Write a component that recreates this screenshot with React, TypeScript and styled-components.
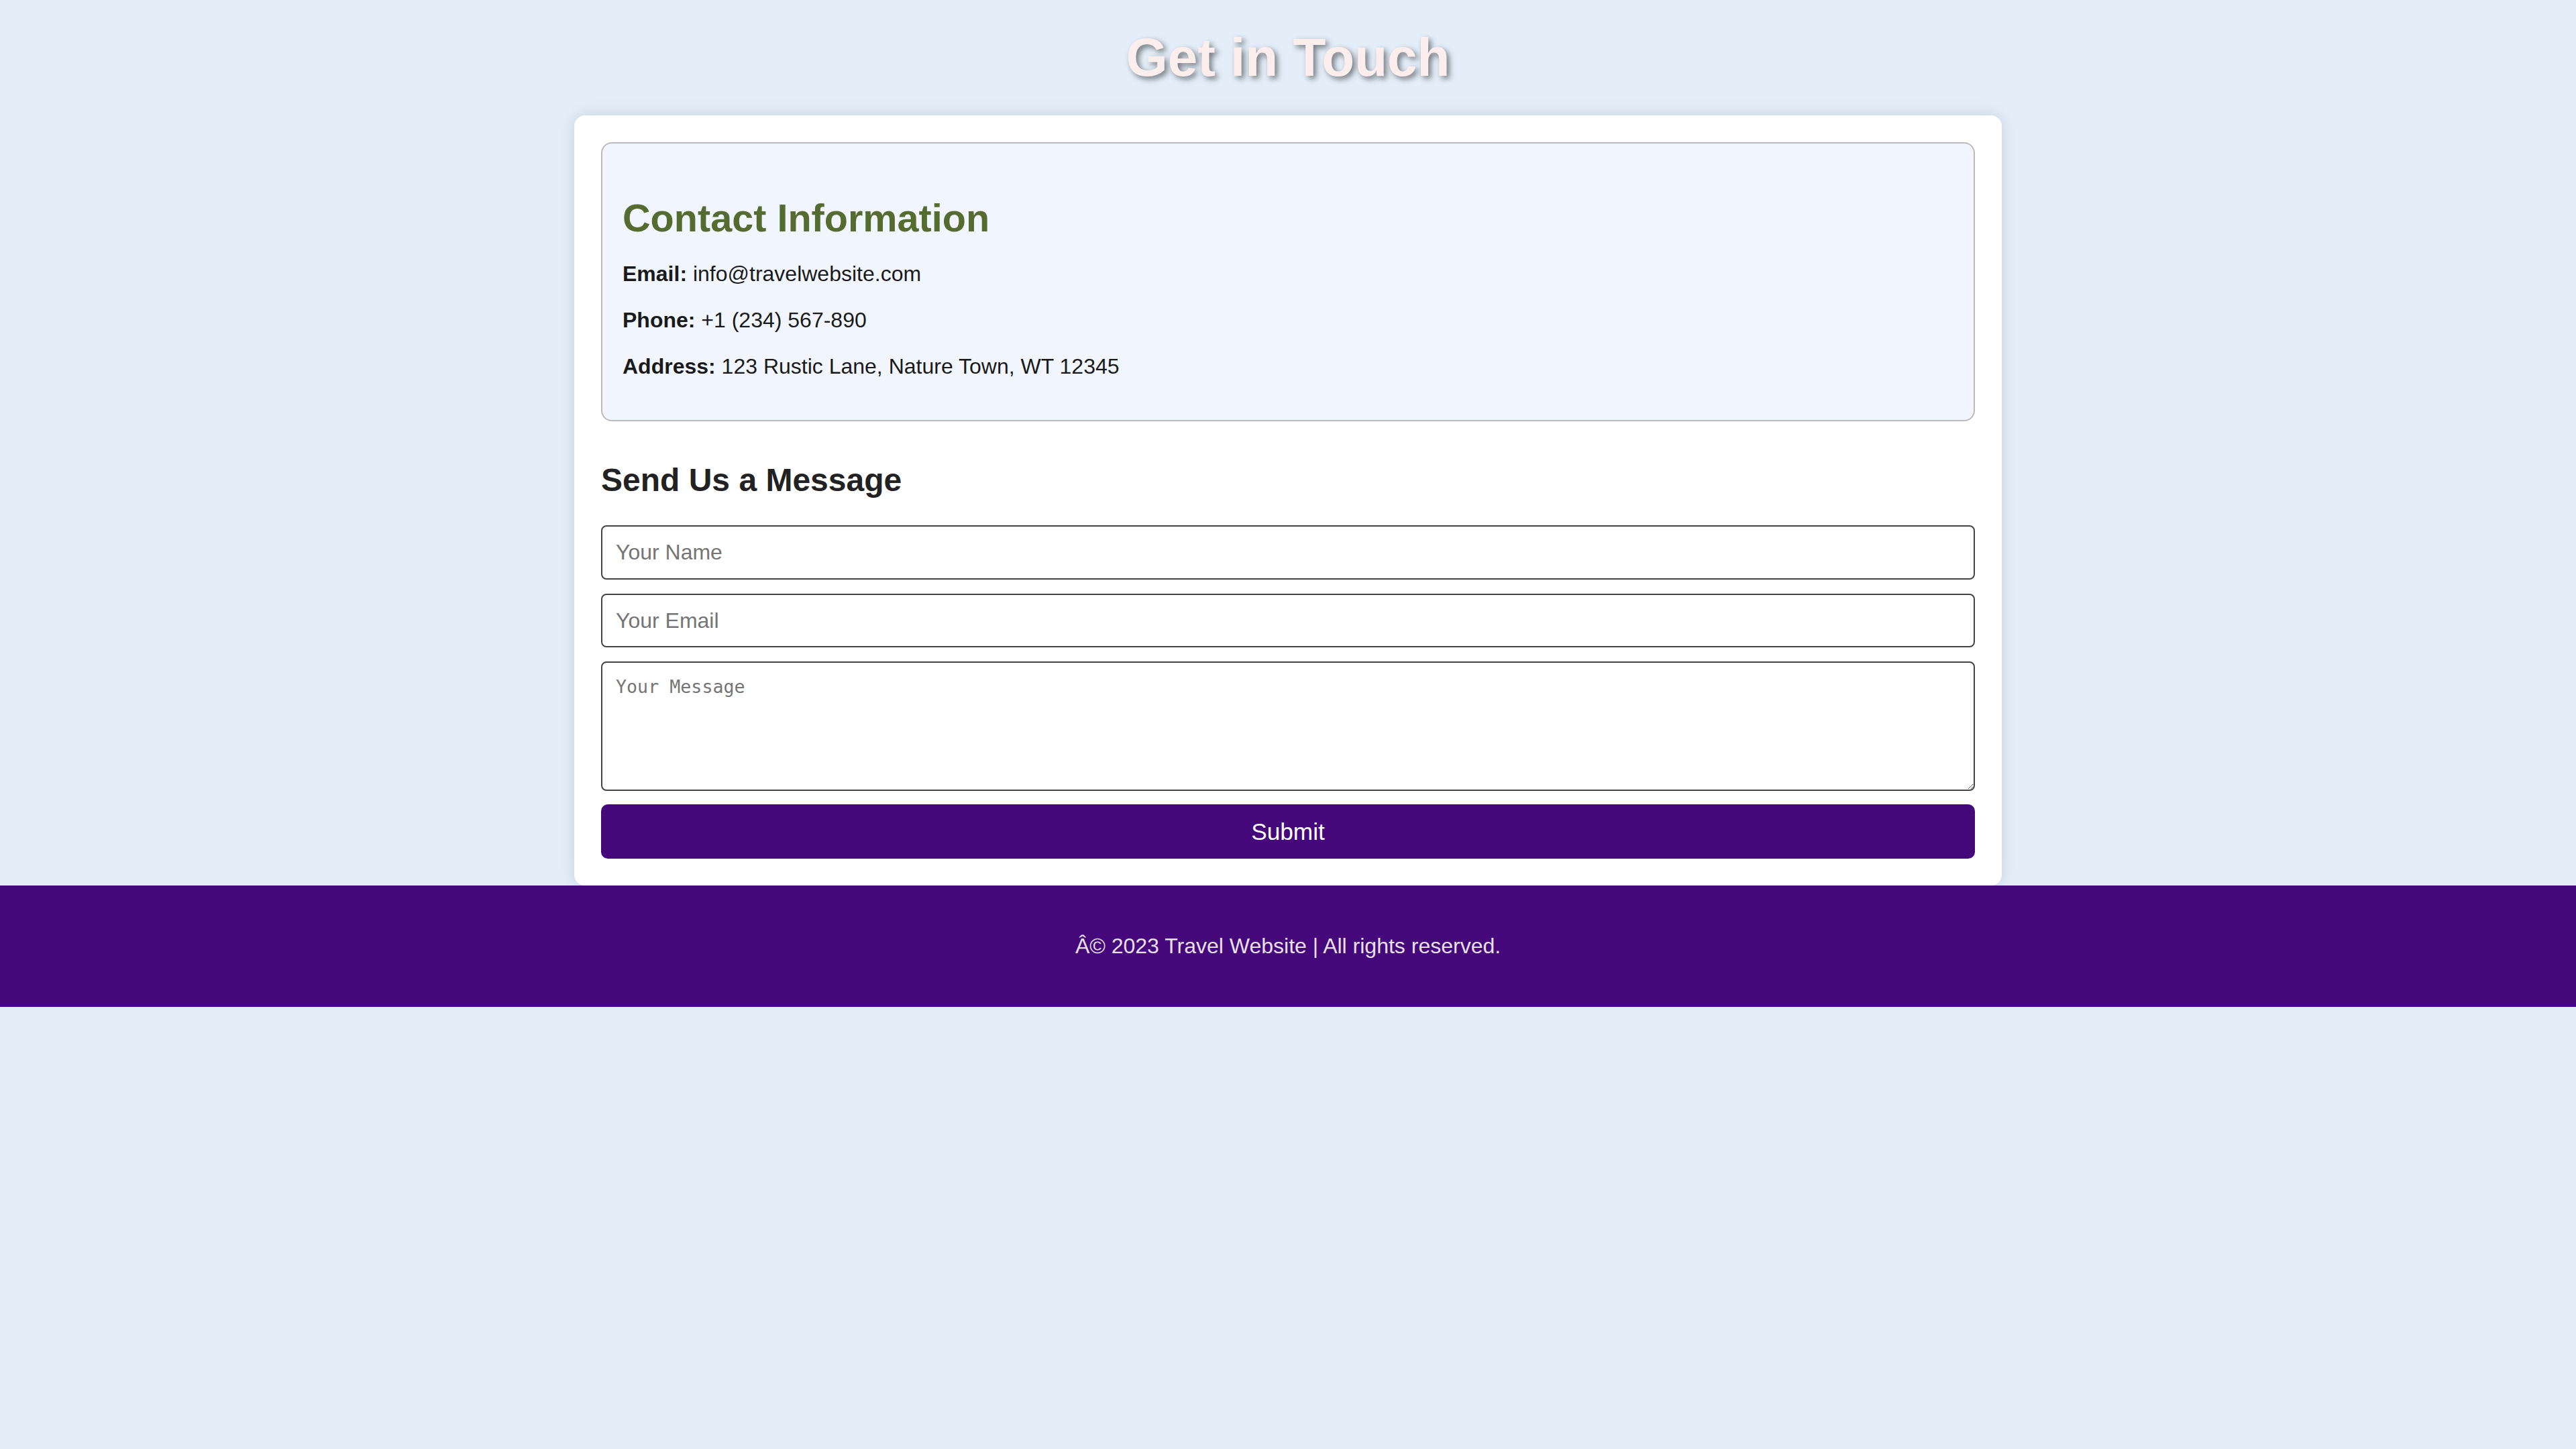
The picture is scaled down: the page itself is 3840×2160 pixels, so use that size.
import React from "react";
import styled, { createGlobalStyle } from "styled-components";

const GlobalStyle = createGlobalStyle`
  html, body {
    margin: 0;
    padding: 0;
    background: #e3eef8;
  }
  body {
    font-family: "Liberation Sans", Arial, sans-serif;
    font-size: 32px;
    color: #1a1a1a;
  }
  * { box-sizing: border-box; }
`;

const Header = styled.header`
  padding: 40px 0;
  text-align: center;
`;

const PageTitle = styled.h1`
  margin: 0;
  font-size: 80px;
  font-weight: 700;
  line-height: 92px;
  color: #fdeeee;
  text-shadow: 4px 4px 8px rgba(0, 0, 0, 0.5);
`;

const Card = styled.main`
  width: 2128px;
  margin: 0 auto;
  padding: 40px;
  background: #ffffff;
  border-radius: 16px;
  box-shadow: 0 0 24px rgba(0, 0, 0, 0.12);
`;

const ContactBox = styled.section`
  padding: 30px;
  background: #f1f6fe;
  border: 2px solid #bbbbbb;
  border-radius: 16px;
`;

const InfoTitle = styled.h2`
  margin: 48px 0 32px;
  font-size: 57.6px;
  line-height: 66px;
  font-weight: 700;
  color: #556b2f;
`;

const InfoLine = styled.p`
  margin: 32px 0;
  font-size: 32px;
  line-height: 36.8px;
  color: #1a1a1a;
`;

const Label = styled.strong`
  font-weight: 700;
`;

const FormTitle = styled.h2`
  margin: 60px 0 40px;
  font-size: 48px;
  line-height: 55px;
  font-weight: 700;
  color: #222222;
`;

const Form = styled.form`
  display: flex;
  flex-direction: column;
  gap: 20.5px;
`;

const TextInput = styled.input`
  width: 100%;
  height: 80.8px;
  padding: 20px;
  border: 2px solid #444444;
  border-radius: 8px;
  background: #ffffff;
  font-family: "Liberation Sans", Arial, sans-serif;
  font-size: 32px;
  color: #1a1a1a;
  outline: none;
  &::placeholder {
    color: #757575;
  }
`;

const MessageArea = styled.textarea`
  width: 100%;
  height: 193px;
  padding: 20px;
  border: 2px solid #444444;
  border-radius: 8px;
  background: #ffffff;
  font-family: "DejaVu Sans Mono", "Liberation Mono", monospace;
  font-size: 26.67px;
  color: #1a1a1a;
  outline: none;
  resize: vertical;
  &::placeholder {
    color: #757575;
  }
`;

const SubmitButton = styled.button`
  width: 100%;
  height: 80.5px;
  padding: 20px;
  border: none;
  border-radius: 10px;
  background: #44087a;
  color: #ffffff;
  font-family: "Liberation Sans", Arial, sans-serif;
  font-size: 35.2px;
  cursor: pointer;
`;

const Footer = styled.footer`
  padding: 40px 0;
  background: #44087a;
  text-align: center;
`;

const FooterText = styled.p`
  margin: 32px 0;
  font-size: 32px;
  line-height: 36.8px;
  color: #e8e0e8;
`;

export default function App() {
  return (
    <>
      <GlobalStyle />
      <Header>
        <PageTitle>Get in Touch</PageTitle>
      </Header>
      <Card>
        <ContactBox>
          <InfoTitle>Contact Information</InfoTitle>
          <InfoLine>
            <Label>Email:</Label> info@travelwebsite.com
          </InfoLine>
          <InfoLine>
            <Label>Phone:</Label> +1 (234) 567-890
          </InfoLine>
          <InfoLine>
            <Label>Address:</Label> 123 Rustic Lane, Nature Town, WT 12345
          </InfoLine>
        </ContactBox>
        <FormTitle>Send Us a Message</FormTitle>
        <Form onSubmit={(e) => e.preventDefault()}>
          <TextInput type="text" placeholder="Your Name" />
          <TextInput type="email" placeholder="Your Email" />
          <MessageArea placeholder="Your Message" />
          <SubmitButton type="submit">Submit</SubmitButton>
        </Form>
      </Card>
      <Footer>
        <FooterText>Â© 2023 Travel Website | All rights reserved.</FooterText>
      </Footer>
    </>
  );
}
